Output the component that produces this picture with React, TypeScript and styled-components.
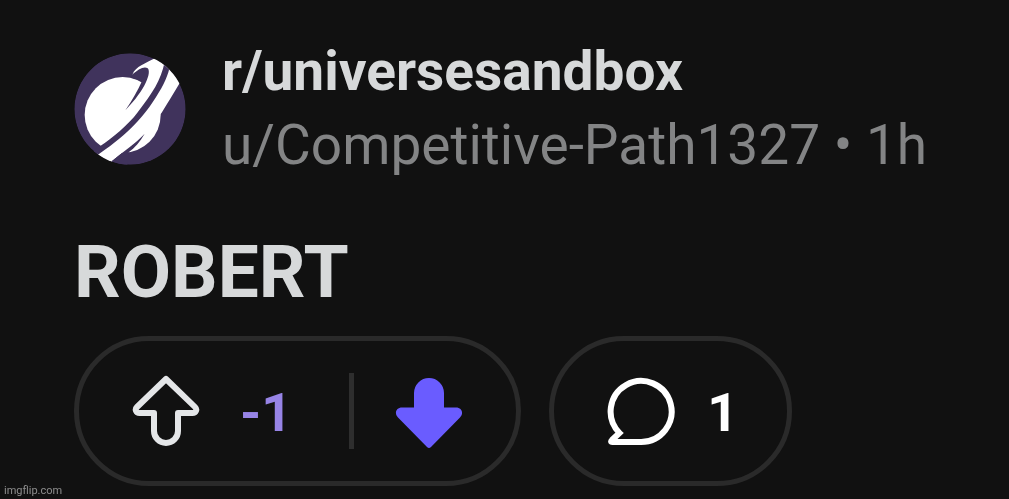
import React from "react";
import styled, { createGlobalStyle } from "styled-components";

const GlobalStyle = createGlobalStyle`
  * { box-sizing: border-box; }
  body {
    margin: 0;
    background: #111111;
    color: #d7dadc;
    font-family: Roboto, "Liberation Sans", sans-serif;
  }
`;

const Post = styled.article`
  padding: 35px 74px 12px;
`;

const Header = styled.header`
  display: flex;
  align-items: center;
  gap: 36px;
`;

const Avatar = styled.svg`
  flex: none;
  width: 112px;
  height: 112px;
`;

const Names = styled.div`
  display: flex;
  flex-direction: column;
  white-space: nowrap;
`;

const Community = styled.a`
  font-size: 55px;
  line-height: 72px;
  font-weight: 700;
  color: #d7d9da;
  text-decoration: none;
`;

const Byline = styled.div`
  font-size: 55px;
  line-height: 76px;
  color: #838485;
`;

const Author = styled.a`
  color: inherit;
  text-decoration: none;
`;

const Title = styled.h1`
  margin: 47px 0 22px;
  font-size: 73px;
  line-height: 84px;
  font-weight: 700;
  color: #d7d9da;
`;

const Actions = styled.div`
  display: flex;
  gap: 28px;
`;

const Pill = styled.div`
  display: flex;
  align-items: center;
  height: 150px;
  padding: 0 53px;
  border: 5px solid #2a2a2a;
  border-radius: 75px;
`;

const CommentPill = styled(Pill).attrs({ as: "button", type: "button" })`
  gap: 32px;
  padding: 0 49px 0 53px;
  background: none;
  color: #ffffff;
  font-family: inherit;
  cursor: pointer;
`;

const VoteButton = styled.button`
  display: flex;
  padding: 0;
  border: 0;
  background: none;
  cursor: pointer;
`;

const Icon = styled.svg`
  display: block;
  flex: none;
  width: 68px;
  height: 74px;
`;

const Count = styled.span<{ $tone?: string }>`
  padding-top: 4px;
  font-size: 54px;
  line-height: 64px;
  font-weight: 700;
  color: ${(p) => p.$tone ?? "inherit"};
`;

const VoteCount = styled(Count)`
  margin: 0 57px 0 40px;
`;

const Divider = styled.span`
  width: 5px;
  height: 76px;
  margin-right: 41px;
  background: #2e2e2e;
`;

const Watermark = styled.footer`
  position: fixed;
  left: 4px;
  bottom: 1px;
  font-size: 11px;
  line-height: 14px;
  color: #8e8e8e;
`;

export default function App() {
  return (
    <>
      <GlobalStyle />
      <Post>
        <Header>
          <Avatar viewBox="40 41 336 336" aria-hidden="true">
            <defs>
              <clipPath id="disc">
                <circle cx="208" cy="209" r="167" />
              </clipPath>
            </defs>
            <g clipPath="url(#disc)">
              <circle cx="208" cy="209" r="167" fill="#40335c" />
              <circle cx="186" cy="227" r="114" fill="#fff" />
              <path
                d="M215 106 C226 80 252 74 288 54 L330 60 L366 120 L355 135 C338 164 322 190 303 220 L252 283 C225 312 190 335 155 364 L150 380 L108 342 L118 330 L195 210 L250 140 L262 88 Z"
                fill="#fff"
              />
              <path
                d="M214 107 C232 90 250 80 261 87 C273 98 256 150 194 213 C215 182 232 152 243 127 Q228 118 212 115 Z"
                fill="#40335c"
              />
              <path
                d="M100 330 L120 319 C150 300 205 254 230 220 C276 160 300 125 312 68 L328 78 C324 105 308 140 288 170 C250 232 205 281 118 342 L100 355 Z"
                fill="#40335c"
              />
              <path d="M252 283 C238 308 222 326 204 339 L200 380 L140 376 L155 364 C190 335 225 312 252 283 Z" fill="#40335c" />
            </g>
          </Avatar>
          <Names>
            <Community href="#community">r/universesandbox</Community>
            <Byline>
              <Author href="#author">u/Competitive-Path1327</Author> • 1h
            </Byline>
          </Names>
        </Header>

        <Title>ROBERT</Title>

        <Actions>
          <Pill>
            <VoteButton type="button" aria-label="Upvote">
              <Icon viewBox="0 0 68 74" fill="none" stroke="#e4e6e8" strokeWidth="6" strokeLinejoin="round">
                <path d="M34 5 L5 33 C2.500 35.500 4 39 7.500 39 H22 V57 A12 12 0 0 0 46 57 V39 H60.500 C64 39 65.500 35.500 63 33 Z" />
              </Icon>
            </VoteButton>
            <VoteCount $tone="#9784e6">-1</VoteCount>
            <Divider />
            <VoteButton type="button" aria-label="Downvote" aria-pressed="true">
              <Icon viewBox="0 0 68 74" fill="#6a5cff">
                <path d="M19 33.500 V19 A15 15 0 0 1 49 19 V33.500 H61 C67 33.500 69 39.500 65 43.500 L36 73 Q34 75 32 73 L3 43.500 C-1 39.500 1 33.500 7 33.500 Z" />
              </Icon>
            </VoteButton>
          </Pill>
          <CommentPill aria-label="1 comment">
            <Icon viewBox="0 0 68 74" fill="none" stroke="#ffffff" strokeWidth="6" strokeMiterlimit="2">
              <path d="M34 68 A30.500 30.500 0 1 0 12.500 59 L5 66 Q3 68 5.500 68 Z" />
            </Icon>
            <Count>1</Count>
          </CommentPill>
        </Actions>
      </Post>
      <Watermark>imgflip.com</Watermark>
    </>
  );
}
